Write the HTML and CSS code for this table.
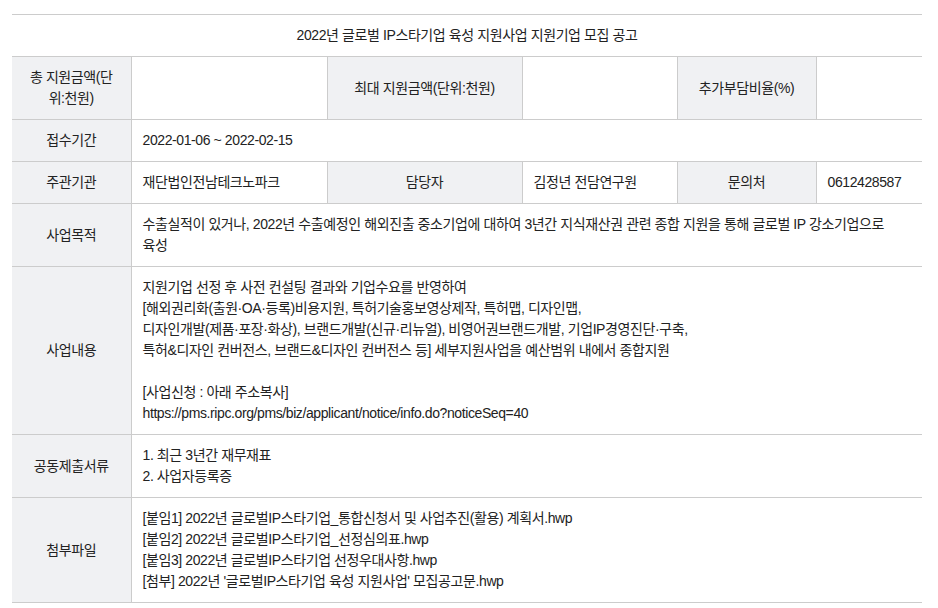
FILE: index.html
```html
<!DOCTYPE html>
<html lang="ko">
<head>
<meta charset="utf-8">
<title>2022년 글로벌 IP스타기업 육성 지원사업 지원기업 모집 공고</title>
<link rel="stylesheet" href="styles.css">
</head>
<body>
<div class="page">
  <table class="board">
    <colgroup>
      <col class="c1"><col class="c2"><col class="c3"><col class="c4"><col class="c5"><col class="c6">
    </colgroup>
    <thead>
      <tr><th colspan="6" class="title">2022년 글로벌 IP스타기업 육성 지원사업 지원기업 모집 공고</th></tr>
    </thead>
    <tbody>
      <tr>
        <th>총 지원금액(단위:천원)</th>
        <td></td>
        <th>최대 지원금액(단위:천원)</th>
        <td></td>
        <th>추가부담비율(%)</th>
        <td></td>
      </tr>
      <tr>
        <th>접수기간</th>
        <td colspan="5">2022-01-06 ~ 2022-02-15</td>
      </tr>
      <tr>
        <th>주관기관</th>
        <td>재단법인전남테크노파크</td>
        <th>담당자</th>
        <td>김정년 전담연구원</td>
        <th>문의처</th>
        <td>0612428587</td>
      </tr>
      <tr>
        <th>사업목적</th>
        <td colspan="5">수출실적이 있거나, 2022년 수출예정인 해외진출 중소기업에 대하여 3년간 지식재산권 관련 종합 지원을 통해 글로벌 IP 강소기업으로 육성</td>
      </tr>
      <tr>
        <th>사업내용</th>
        <td colspan="5">지원기업 선정 후 사전 컨설팅 결과와 기업수요를 반영하여<br>[해외권리화(출원·OA·등록)비용지원, 특허기술홍보영상제작, 특허맵, 디자인맵,<br>디자인개발(제품·포장·화상), 브랜드개발(신규·리뉴얼), 비영어권브랜드개발, 기업IP경영진단·구축,<br>특허&amp;디자인 컨버전스, 브랜드&amp;디자인 컨버전스 등] 세부지원사업을 예산범위 내에서 종합지원<br><br>[사업신청 : 아래 주소복사]<br>https://pms.ripc.org/pms/biz/applicant/notice/info.do?noticeSeq=40</td>
      </tr>
      <tr>
        <th>공동제출서류</th>
        <td colspan="5">1. 최근 3년간 재무재표<br>2. 사업자등록증</td>
      </tr>
      <tr>
        <th>첨부파일</th>
        <td colspan="5">[붙임1] 2022년 글로벌IP스타기업_통합신청서 및 사업추진(활용) 계획서.hwp<br>[붙임2] 2022년 글로벌IP스타기업_선정심의표.hwp<br>[붙임3] 2022년 글로벌IP스타기업 선정우대사항.hwp<br>[첨부] 2022년 '글로벌IP스타기업 육성 지원사업' 모집공고문.hwp</td>
      </tr>
    </tbody>
  </table>
</div>
</body>
</html>
```

FILE: styles.css
```css
html, body {
  margin: 0;
  padding: 0;
  background: #fff;
}

.page {
  padding: 14px 16px 0 12px;
}

.board {
  width: 910px;
  table-layout: fixed;
  border-collapse: collapse;
  border-top: 1px solid #cccccc;
  font-family: "Liberation Sans", "Noto Sans CJK KR", sans-serif;
  font-size: 14px;
  line-height: 21px;
  color: #222;
}

.c1 { width: 119px; }
.c2 { width: 196px; }
.c3 { width: 195px; }
.c4 { width: 155px; }
.c5 { width: 139px; }
.c6 { width: 106px; }

.board th,
.board td {
  padding: 10px 11px;
  border-bottom: 1px solid #cccccc;
  border-right: 1px solid #cccccc;
  vertical-align: middle;
  letter-spacing: -0.4px;
}

.board th:last-child,
.board td:last-child {
  border-right: none;
}

.board th {
  padding-left: 13px;
  padding-right: 13px;
  font-weight: normal;
  text-align: center;
  background: #f0f1f3;
  word-break: break-all;
}

.board td {
  padding-right: 16px;
  text-align: left;
  background: #fff;
  word-break: keep-all;
}

.board .title {
  background: #fff;
  text-align: center;
}
```
